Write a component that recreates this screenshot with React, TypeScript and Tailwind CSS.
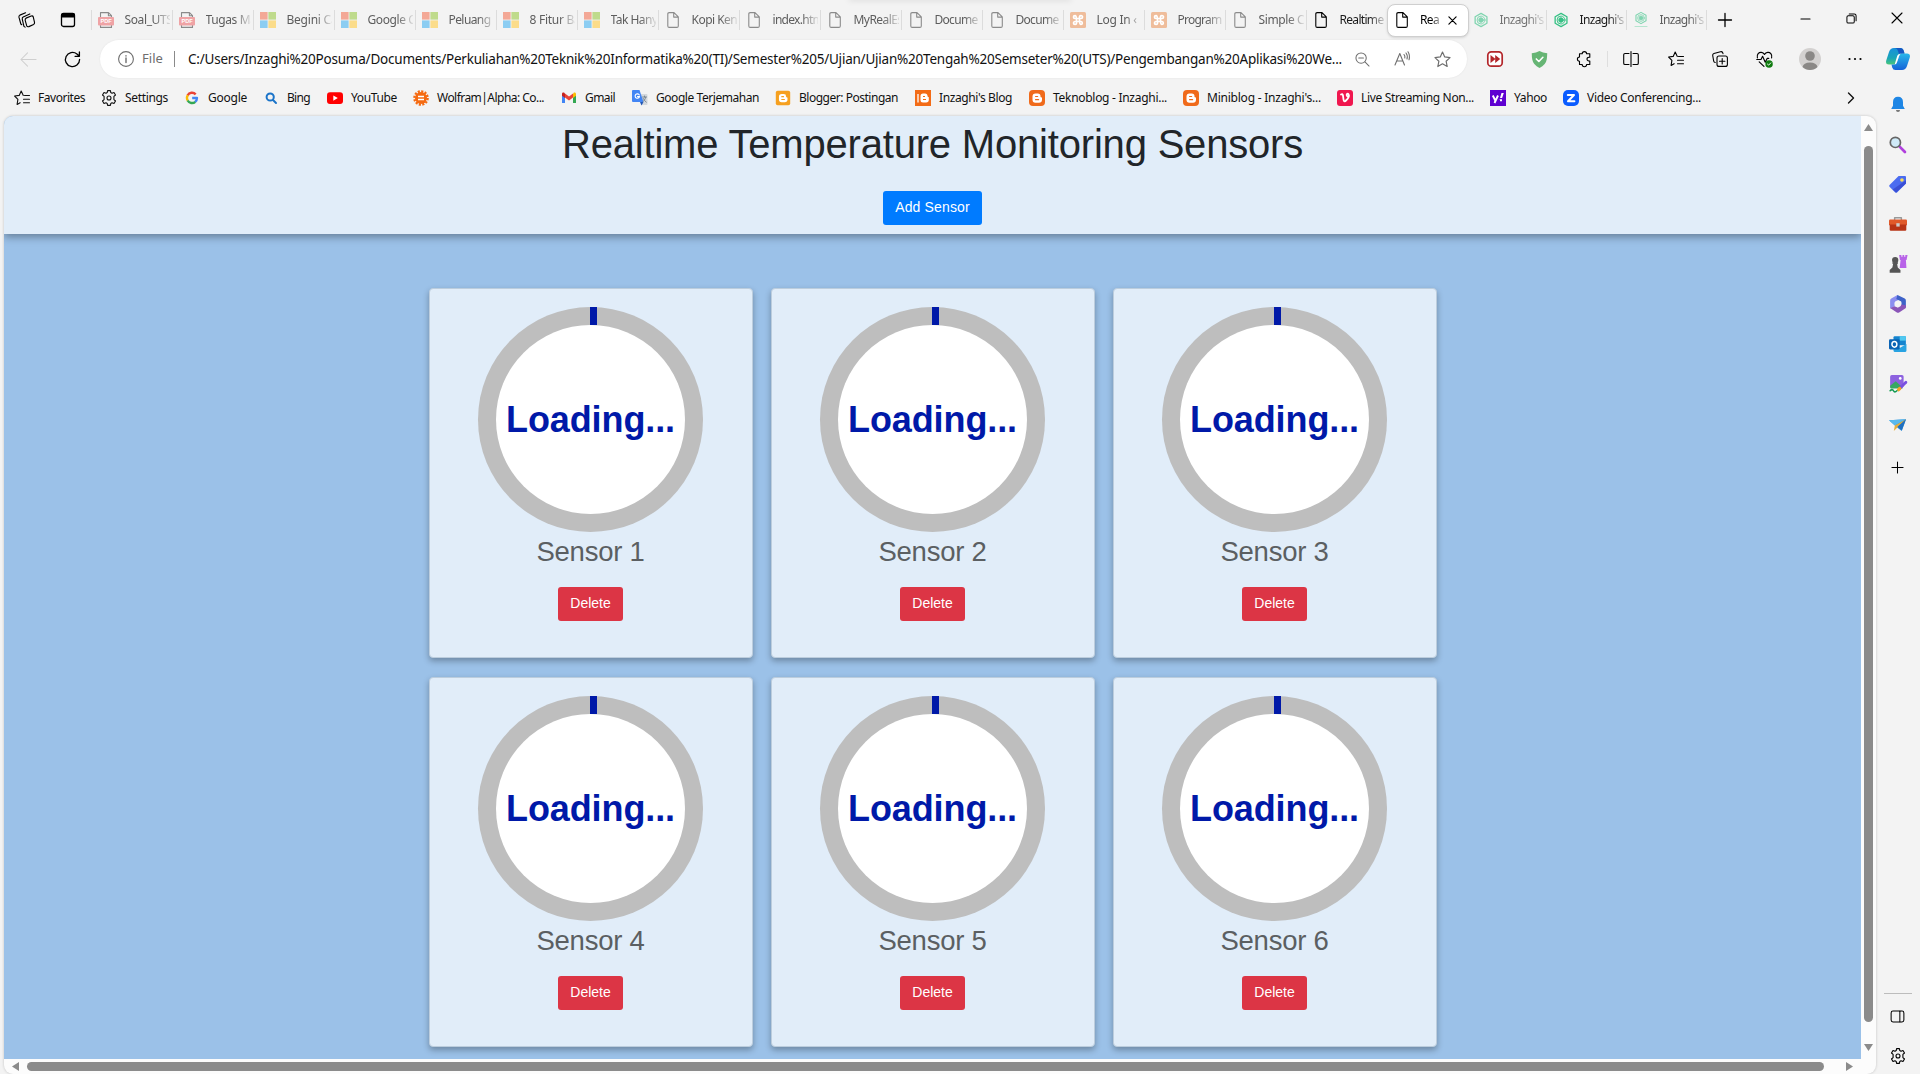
import { useLayoutEffect, useRef, useState, type ReactNode } from "react";

/* Text run whose tracking is set so that it fills the given width. */
function Fit({ w, children, className = "" }: { w: number; children: string; className?: string }) {
  const ref = useRef<HTMLSpanElement>(null);
  const [ls, setLs] = useState(0);
  useLayoutEffect(() => {
    if (ref.current) setLs((w - ref.current.getBoundingClientRect().width) / children.length);
  }, [w, children]);
  return (
    <span ref={ref} className={`whitespace-pre shrink-0 ${className}`} style={{ letterSpacing: `${ls}px` }}>
      {children}
    </span>
  );
}

function Ico({ s = 16, vb = 16, children, className = "", sw = 1.1 }: { s?: number; vb?: number; children: ReactNode; className?: string; sw?: number }) {
  return (
    <svg width={s} height={s} viewBox={`0 0 ${vb} ${vb}`} fill="none" stroke="currentColor" strokeWidth={sw} strokeLinejoin="round" strokeLinecap="round" className={`shrink-0 overflow-visible ${className}`}>
      {children}
    </svg>
  );
}

const GEAR = "M6.6 .6h2.8l.4 2 1.200.7 2-.8 1.500 2.500-1.600 1.400v3.200l1.600 1.400-1.500 2.500-2-.8-1.200.7-.4 2H6.600l-.4-2-1.200-.7-2 .8-1.500-2.500 1.600-1.400V6.400L1.500 5 3 2.500l2 .8 1.200-.7z";

const Gear = () => (
  <Ico><path d={GEAR} /><circle cx="8" cy="8" r="2" /></Ico>
);
const FavList = () => (
  <Ico><path d="M9.300 5.500 7.200 1 5.200 5.400.6 6l3.300 3.400-.8 5 3-1.700M10.500 5.500h5M9.500 9.200h6M9.500 12.800h6" /></Ico>
);
const Pdf = () => (
  <Ico s={16} sw={1.1}>
    <path d="M2.500 5V.6h8L13.500 3.700V5M2.500 13v2.400h11V13M10.400.6v3.200h3" stroke="#8a8a8a" />
    <rect x="0" y="5" width="16" height="8.500" rx="1" fill="#efa3a5" stroke="none" />
    <text x="8" y="11.300" textAnchor="middle" fontSize="5.600" fontWeight="700" fill="#fff" stroke="none" fontFamily="Liberation Sans, sans-serif">PDF</text>
  </Ico>
);
const Ms = () => (
  <Ico><g stroke="none"><path fill="#f3a896" d="M0 0h7.600v7.600H0z" /><path fill="#bfdb8c" d="M8.400 0H16v7.600H8.400z" /><path fill="#8ccdf2" d="M0 8.400h7.600V16H0z" /><path fill="#fbdc8a" d="M8.400 8.400H16V16H8.400z" /></g></Ico>
);
const Page = () => (
  <Ico><path d="M2.800 2q0-1.400 1.400-1.400H9l4.300 4.300V14q0 1.400-1.400 1.400H4.200q-1.400 0-1.400-1.400zM8.700.8v4.300h4.400" /></Ico>
);
const Xampp = () => (
  <Ico><rect width="16" height="16" rx="1.500" fill="#efbd9b" stroke="none" /><path d="M5 3.600c-2 0-2 2.600 0 2.900h6c2-.3 2-2.900 0-2.900s-1.500 1.500-1.500 4.400 0 4.400 1.500 4.400 2-2.600 0-2.900H5c-2 .3-2 2.900 0 2.900S6.500 11 6.500 8 6.500 3.600 5 3.600z" stroke="#fff" strokeWidth="1.700" /></Ico>
);
const Hex = ({ line }: { line?: boolean }) => (
  <Ico>
    <g stroke="#35c184" transform={line ? "translate(2 0) scale(.75)" : "translate(1 1) scale(.88)"}>
      <path d="M8 .5 14.700 4.300v7.400L8 15.500 1.300 11.700V4.300z" strokeWidth="1.500" />
      <circle cx="8" cy="8" r="4.500" /><circle cx="8" cy="8" r="2.600" fill="#35c184" />
    </g>
    {line && <path d="M2 14.500h12" stroke="#8fdcb8" />}
  </Ico>
);

type TabT = [string, number, ReactNode];
const TABS: TabT[] = [
  ["Soal_UTS", 48, <Pdf />], ["Tugas Ma", 51, <Pdf />],
  ["Begini Ca", 51, <Ms />], ["Google C", 48, <Ms />], ["Peluang", 42, <Ms />], ["8 Fitur Ba", 51, <Ms />], ["Tak Hany", 47, <Ms />],
  ["Kopi Kena", 52, <Page />], ["index.html", 53, <Page />], ["MyRealEs", 49, <Page />], ["Docume", 43, <Page />], ["Docume", 43, <Page />],
  ["Log In ‹ ", 43, <Xampp />], ["Program", 44, <Xampp />], ["Simple Ca", 52, <Page />],
];

function Tab({ t, w, icon, dim, last }: { t: string; w: number; icon: ReactNode; dim: boolean; last?: boolean }) {
  return (
    <div className={`flex h-5 items-center pl-[5.500px] shrink-0 border-l border-[#dcdcdc] ${last ? "w-20" : "w-[81px]"} ${dim ? "text-[#5d5d5d]" : "text-[#1a1a1a]"}`}>
      <span className={dim ? "text-[#8b8b8b]" : "text-black"}>{icon}</span>
      <div className="ml-[11px] w-[45px] overflow-hidden text-[12px] leading-5 [mask-image:linear-gradient(to_right,black_64%,transparent_106%)]">
        <Fit w={w}>{t}</Fit>
      </div>
    </div>
  );
}

const Blogger = ({ c, r = 3 }: { c: string; r?: number }) => (
  <Ico><rect width="16" height="16" rx={r} fill={c} stroke="none" /><path fill="#fff" stroke="none" fillRule="evenodd" d="M6.500 3.500h2.300a2.700 2.700 0 0 1 2.700 2.700c0 .8.200 1 .7 1 .5.100.8.300.8.800v1.700a3 3 0 0 1-3 3H6.500a3 3 0 0 1-3-3V6.500a3 3 0 0 1 3-3zm.1 2.400a.6.600 0 0 0 0 1.200h2a.6.600 0 0 0 0-1.200zm0 3.200a.6.600 0 0 0 0 1.200h3a.6.600 0 0 0 0-1.200z" /></Ico>
);

const MARKS: [string, string, number, ReactNode][] = [
  ["Favorites", "w-[87px]", 47, <FavList />],
  ["Settings", "w-[83px]", 43, <Gear />],
  ["Google", "w-[79px]", 39, <Ico className="p-px"><g strokeWidth="2.700" strokeLinecap="butt"><path stroke="#ea4335" d="M3 5a5.700 5.700 0 0 1 9.200-1.200" /><path stroke="#fbbc05" d="M3.200 11a5.700 5.700 0 0 1 0-6.200" /><path stroke="#34a853" d="M11.800 12.300A5.700 5.700 0 0 1 3 10.800" /><path stroke="#4285f4" d="M8.200 8h5.500a5.700 5.700 0 0 1-2.100 4.400" /></g></Ico>],
  ["Bing", "w-[64px]", 23, <Ico sw={2}><circle cx="7.200" cy="7" r="3.600" stroke="#1b74c9" /><path d="M10 10l3 3" stroke="#1b74c9" /></Ico>],
  ["YouTube", "w-[86px]", 46, <Ico><g stroke="none"><rect y="2.300" width="16" height="11.600" rx="3" fill="#f00" /><path d="M6.300 5.500 10.800 8.100 6.300 10.700z" fill="#fff" /></g></Ico>],
  ["Wolfram|Alpha: Co...", "w-[148px]", 107, <Ico><circle cx="8" cy="8" r="6" fill="#f56a11" stroke="none" /><circle cx="8" cy="8" r="6.600" stroke="#f56a11" strokeWidth="2.400" strokeDasharray="2.100 1.355" strokeLinecap="butt" /><path d="M5 6.600h6M5 9.500h6" stroke="#fff" strokeWidth="1.500" strokeLinecap="butt" /></Ico>],
  ["Gmail", "w-[71px]", 30, <Ico><g stroke="none"><path d="M1 4v9h3V7z" fill="#4285f4" /><path d="M12 7v6h3V4z" fill="#34a853" /><path d="M12 4v4l3-2.200V4c0-1.300-1.500-2-2.500-1z" fill="#fbbc04" /><path d="M4 3.500v4L8 10.500l4-3v-4L8 6.500z" fill="#ea4335" /><path d="M1 4v1.800L4 8V3.500L3.500 3C2.500 2.200 1 2.700 1 4z" fill="#c5221f" /></g></Ico>],
  ["Google Terjemahan", "w-[143px]", 103, <Ico><g stroke="none"><path d="M7 4h7.500q1 0 1 1v9q0 1-1 1H9z" fill="#d4d8dc" /><path d="M1 0h6.500L11.500 12H1q-1 0-1-1V1q0-1 1-1z" fill="#4285f4" /><path d="M8 12h3.500L9.500 15.500z" fill="#1f56b8" /></g><path d="M7.300 5A2.200 2.200 0 1 0 7.500 6.600H5.500" stroke="#fff" /><path d="M10.500 7h4M12.500 6v1M13.800 7.200q-.5 3-3 4.500M11.300 8.500q1 2.500 3 3.700" stroke="#6b7a87" strokeWidth=".8" /></Ico>],
  ["Blogger: Postingan", "w-[140px]", 99, <span className="block scale-90"><Blogger c="#f6a01f" r={2} /></span>],
  ["Inzaghi's Blog", "w-[114px]", 73, <Ico><rect width="16" height="16" fill="#f36b16" stroke="none" /><path d="M3 4v8.500" stroke="#fff" strokeLinecap="butt" strokeWidth="1.300" /><path fill="#fff" stroke="none" fillRule="evenodd" d="M8 3.500h2q2.500 0 2.500 2.500 0 1 1.300 1.300v2.500q0 2.700-2.700 2.700H8q-2.500 0-2.500-2.500V6q0-2.500 2.500-2.500zm0 2.500v1h2V6zm0 3v1h3V9z" /></Ico>],
  ["Teknoblog - Inzaghi...", "w-[154px]", 114, <Blogger c="#f06a1a" r={4} />],
  ["Miniblog - Inzaghi's...", "w-[154px]", 114, <Blogger c="#f06a1a" r={4} />],
  ["Live Streaming Non...", "w-[153px]", 113, <Ico><rect width="16" height="16" rx="3" fill="#f0174f" stroke="none" /><path d="M4 4.500c2-1.200 2 1 2.300 3.500.2 2.500.7 4.500 2.700 2.500s3.500-5 2.500-6.300-2.800.300-1.300 2" stroke="#fff" strokeWidth="1.800" /></Ico>],
  ["Yahoo", "w-[73px]", 33, <Ico><rect width="16" height="16" fill="#5f01d1" stroke="none" /><path d="M2.800 5.500 5.300 10.500M8 5.500 4.500 13M9.800 9.800v.3" stroke="#fff" strokeWidth="1.900" strokeLinecap="butt" /><path d="M11.500 3h2.300l-1.700 5H10zM10 9.200h2v2h-2z" fill="#fff" stroke="none" /></Ico>],
  ["Video Conferencing...", "w-[150px]", 114, <Ico><rect width="16" height="16" rx="5" fill="#0b5cff" stroke="none" /><path d="M4.800 5h6.200l-6 6.200h6.400" stroke="#fff" strokeWidth="2" /></Ico>],
];

const Slot = ({ className, children }: { className: string; children: ReactNode }) => (
  <div className={`flex h-full shrink-0 items-center justify-center ${className}`}>{children}</div>
);

function TabStrip() {
  return (
    <div className="flex h-10 items-center text-black">
      <Slot className="w-[52px]">
        <Ico s={17} vb={18} sw={1.200}><path d="M8.500 6.500 14 4.300q1.700-.5 2.200 1L17.500 11q.3 1.500-1 2.200l-5 2.300q-1.700.5-2.300-1L7.600 8.800q-.3-1.600.9-2.300zM7.500 16 6.300 15.200 4.500 7.500Q4.300 6 5.500 5.300L12.500 2M4 13.500l-1-.8L1 5.500Q.8 4 2 3.300L8 .8" /></Ico>
      </Slot>
      <Slot className="w-8">
        <Ico><rect x="1.500" y="1.500" width="13" height="13" rx="2" strokeWidth="1.300" /><path d="M1 5.500V3q0-2 2-2h10q2 0 2 2v2.500z" fill="black" stroke="none" /></Ico>
      </Slot>
      <div className="w-[7px] shrink-0" />
      {TABS.map(([t, w, icon], i) => <Tab key={i} t={t} w={w} icon={icon} dim />)}
      <Tab t="Realtime" w={44} icon={<Page />} dim={false} />
      <div className="z-10 flex h-[33px] w-[82px] shrink-0 items-center rounded-lg border border-[#cfcfcf] bg-white pl-[6px] shadow-sm">
        <Page />
        <div className="ml-[10px] w-[19px] overflow-hidden text-[12px] leading-5 [mask-image:linear-gradient(to_right,black_60%,rgba(0,0,0,.4))]"><Fit w={19}>Rea</Fit></div>
        <Ico s={9} vb={10} className="ml-[9px]" sw={1.300}><path d="M1 1l8 8M9 1 1 9" /></Ico>
      </div>
      <div className="-ml-[2px] flex">
        <div className="-ml-px h-5 w-[80px] opacity-60 [&>div]:border-transparent"><Tab t="Inzaghi's" w={44} icon={<Hex />} dim={false} last /></div>
        <Tab t="Inzaghi's" w={44} icon={<Hex />} dim={false} last />
        <Tab t="Inzaghi's" w={44} icon={<span className="block opacity-60"><Hex line /></span>} dim last />
        <div className="h-5 border-l border-[#dcdcdc]" />
      </div>
      <Slot className="w-9"><Ico s={14} vb={14} sw={1.300}><path d="M7 .5v13M.5 7h13" /></Ico></Slot>
      <Slot className="ml-auto w-[45px] pb-1"><Ico s={11} vb={12}><path d="M1 6.500h10" /></Ico></Slot>
      <Slot className="w-[46px] pb-1"><Ico s={11} vb={12}><rect x="1" y="3" width="8" height="8" rx="1.500" /><path d="M3.500 1H9q2 0 2 2v5.500" /></Ico></Slot>
      <Slot className="w-[46px] pb-1"><Ico s={12} vb={12}><path d="M1 1l10 10M11 1 1 11" /></Ico></Slot>
    </div>
  );
}

function Toolbar() {
  return (
    <div className="flex h-[38px] items-center text-black">
      <Slot className="w-14"><Ico s={17} vb={18} className="text-[#cfcfcf]"><path d="M17 9H1M8 2 1 9l7 7" /></Ico></Slot>
      <Slot className="w-8"><Ico s={17} vb={18} sw={1.400}><path d="M16.500 9A7.500 7.500 0 1 1 13.700 3.200L16 5.300M16.300 1v4.600h-4.600" /></Ico></Slot>
      <div className="ml-3 flex h-[38px] w-[1367px] shrink-0 items-center rounded-full bg-white pl-[18px] text-[#6e6e6e] shadow-[0_0_2px_rgba(0,0,0,.08)]">
        <Ico s={16}><circle cx="8" cy="8" r="7.400" /><path d="M8 7v4.500M8 4.700v.3" strokeWidth="1.400" /></Ico>
        <Fit w={21} className="ml-2 text-[13px]">File</Fit>
        <div className="ml-[11px] h-4 w-px bg-[#8a8a8a]" />
        <Fit w={1154} className="ml-[13px] text-[13.500px] text-[#111]">C:/Users/Inzaghi%20Posuma/Documents/Perkuliahan%20Teknik%20Informatika%20(TI)/Semester%205/Ujian/Ujian%20Tengah%20Semseter%20(UTS)/Pengembangan%20Aplikasi%20We...</Fit>
        <Slot className="w-10"><Ico s={15}><circle cx="6.500" cy="6.500" r="5.500" /><path d="M10.600 10.600 15 15M4 6.500h5" /></Ico></Slot>
        <Slot className="w-10"><Ico><path d="M1 14 5.800 2.500 10.500 14M2.700 10h6.200M10 3.500q1.300 1.500.8 3.500M12 2q2 2.500 1 6M14 .8q2.300 3.500 1 8" /></Ico></Slot>
        <Slot className="w-10"><Ico s={17}><path d="m8 1 2.100 4.600 5 .6-3.700 3.400 1 5L8 12.100l-4.400 2.500 1-5L.9 6.200l5-.6z" /></Ico></Slot>
      </div>
      <div className="flex h-full flex-1 items-center pl-[6px]">
        <Slot className="w-[44px]"><Ico><rect x=".8" y=".8" width="14.400" height="14.400" rx="3.500" fill="#fff" stroke="#b3262a" strokeWidth="1.700" /><path d="M3.500 4v8l5-4zM8.200 4v8l5-4z" fill="#b3262a" stroke="none" /></Ico></Slot>
        <Slot className="w-[44px]"><Ico s={17}><path d="M8 0q3 2 7.300 2-.2 4.500-.5 6Q14 13 8 16 2 13 1.200 8 .8 6.500.700 2 5 2 8 0z" fill="#66b574" stroke="none" /><path d="m5 7.500 2.400 2.400 3.800-4" stroke="#fff" strokeWidth="1.500" /></Ico></Slot>
        <Slot className="w-[45px]"><Ico><path d="M3.500 2.800h2.700a2.200 2.200 0 0 1 4.400 0h3.200v3.400h-.9a1.900 1.900 0 1 0 0 3.800h.9v3.500h-3.200a2.200 2.200 0 0 1-4.400 0H3.500v-3.300a2.100 2.100 0 1 1 0-4.200z" /></Ico></Slot>
        <div className="ml-px h-4 w-px bg-[#dedede]" />
        <Slot className="w-[46px]"><Ico><path d="M6 2.500H2q-1.300 0-1.300 1.300v8.400q0 1.300 1.300 1.300h4M10 2.500h4q1.300 0 1.300 1.300v8.400q0 1.300-1.300 1.300h-4M8 .5v15" /></Ico></Slot>
        <Slot className="w-[44px]"><FavList /></Slot>
        <Slot className="w-[44px]"><Ico><rect x="5" y="5" width="10.400" height="10.400" rx="2" /><path d="M10.200 7.500v5.400M7.500 10.200h5.400M3.300 11.500q-1.300-.2-1.600-1.400L.7 4.500q-.2-1.600 1.200-2L8.500.7q1.600-.3 2.200 1l.3 1" /></Ico></Slot>
        <Slot className="w-[45px]"><Ico s={17}><path d="M1.300 6.500C.3 3 3 1 5 1.300q2 .3 3 2 1-1.700 3-2c2-.3 4.700 1.700 3.700 5.200M.7 8h4l1.500-3 2.500 5.500L10.500 7H12M3 10.200l4.500 4.300" /><circle cx="12.300" cy="12.200" r="3.500" fill="#0f7b0f" stroke="none" /><path d="m10.800 12.300 1.100 1 2-2.100" stroke="#fff" strokeWidth=".9" /></Ico></Slot>
        <Slot className="w-[45px]"><Ico s={22} vb={22}><g stroke="none"><circle cx="11" cy="11" r="11" fill="#d3d1d0" /><circle cx="11" cy="8" r="4.800" fill="#8a8886" /><path d="M3.500 19q1-4.500 7.500-4.500t7.500 4.500q-3 3-7.500 3t-7.500-3z" fill="#8a8886" /></g></Ico></Slot>
        <Slot className="w-[46px]"><Ico><g fill="currentColor" stroke="none"><circle cx="2.500" cy="8" r="1.100" /><circle cx="8" cy="8" r="1.100" /><circle cx="13.500" cy="8" r="1.100" /></g></Ico></Slot>
        <Slot className="w-[40px]">
          <svg width="24" height="22" viewBox="0 0 24 22">
            <defs>
              <linearGradient id="ca" x1="0" y1="0" x2="0" y2="1"><stop stopColor="#1690dc" /><stop offset=".6" stopColor="#18a4b8" /><stop offset="1" stopColor="#49c779" /></linearGradient>
              <linearGradient id="cb" x1="0" y1="0" x2="0" y2="1"><stop stopColor="#28b9ea" /><stop offset="1" stopColor="#1462d8" /></linearGradient>
            </defs>
            <path d="M8 0h6.500Q17 0 17.800 3l.7 2.500H16q-2 0-2.700 2L10.500 15q-.6 1.600-2.500 1.600H3Q-1 16.500.4 12L3 4Q4.300 0 8 0z" fill="url(#ca)" />
            <path d="M16 22H9.500Q7 22 6.200 19.500l-.7-3H8q2 0 2.700-2L13.500 7q.6-1.600 2.500-1.600h5q4 .1 2.600 4.600L21 18q-1.300 4-5 4z" fill="url(#cb)" />
            <path d="M14 0q3 0 3.800 3l.7 2.500h-3q-1.500 0-2.200 1.500L12 3Q11.500.5 9 0z" fill="#1557c2" />
            <path d="M15.500 5.500q-1.500 0-2.200 2L10.700 15q-.5 1.300-2 1.600 0-.3 2.500-8.600.8-2.500 4.300-2.500z" fill="#fff" />
          </svg>
        </Slot>
      </div>
    </div>
  );
}

const SIDE: ReactNode[] = [
  <Ico><g stroke="none"><path d="M8 .8q5 0 5 5.500v3.500l1.800 3.200H1.200L3 9.800V6.300Q3 .8 8 .8z" fill="#1e86e5" /><path d="M6 14h4q0 2-2 2t-2-2z" fill="#777" /></g></Ico>,
  <Ico s={17}><path d="m10 10 5 5" stroke="#b040dd" strokeWidth="2.600" /><circle cx="6" cy="6" r="4.800" fill="#cfeaf7" stroke="#666" strokeWidth="1.600" /></Ico>,
  <Ico s={17}><path d="M9 0h6q1 0 1 1v6L7.500 15.500q-.8.700-1.600 0L.5 10q-.7-.8 0-1.600z" fill="#4b6cf0" stroke="none" /><path d="m3.500 12.800 3.200 2.700L16 7V4z" fill="#3a4fd5" stroke="none" /><circle cx="12.200" cy="3.800" r="1.700" fill="#f7dc5b" stroke="none" /></Ico>,
  <Ico s={18}><path d="M5 4V2.500h6V4" stroke="#999" strokeWidth="1.300" /><path d="M1 4h14q1 0 1 1v4H0V5q0-1 1-1z" fill="#e0592a" stroke="none" /><path d="M.6 8.500h14.800V13q0 1-1 1H1.600q-1 0-1-1z" fill="#b83416" stroke="none" /><rect x="6.500" y="7.300" width="3" height="3" fill="#ccc" stroke="none" /></Ico>,
  <Ico s={18}><g stroke="none"><path d="M9 0h2v1.500h1V0h1.500v1.500h1V0h2l-.9 4.500H15l.5 7h-6L10.300 4.500H9.700z" fill="#b863e8" /><circle cx="5.500" cy="4.500" r="2.800" fill="#555" /><path d="M3 6.500h5v1.200H7.200l.6 3.300 2.400 2.300v2.500H.6v-2.500L3 11l.7-3.300H3z" fill="#555" /></g></Ico>,
  <Ico s={18}><g stroke="none"><path d="M7.500 0 2 3.200Q1 3.800 1 5v7l4-2V6.500L11 3z" fill="#8b8ef0" /><path d="m7.500 0 6.500 3.200Q15 3.800 15 5v6l-4-2V6L6.500 3.500z" fill="#3e62c8" /><path d="m1 11.500 6 4q1 .5 2 0l6-4V9l-4-.5-3 2.800L5 10z" fill="#8a55b8" /><circle cx="8" cy="7.800" r="2.900" fill="#f3f3f3" /></g></Ico>,
  <Ico s={18}><g stroke="none"><path d="M5 1h9q1 0 1 1v7H4V2q0-1 1-1z" fill="#1484cf" /><path d="M9.500 1H15v4H9.500z" fill="#50c8f0" /><path d="M4 8l5.500 3.500L15.500 8v6q0 1-1 1H5q-1 0-1-1z" fill="#28a3e2" /><rect x="0" y="3.800" width="9.500" height="9" rx="1" fill="#0b64b5" /></g><ellipse cx="4.800" cy="8.300" rx="2.200" ry="2.500" stroke="#fff" strokeWidth="1.300" /></Ico>,
  <Ico s={18}><g stroke="none"><rect x="1" y="0" width="12" height="11" rx="1.500" fill="#8d62df" /><path d="m1 9.500 5-4 6 5.500v1H2q-1 0-1-1z" fill="#36a861" /><circle cx="10" cy="3" r="1.200" fill="#fff" /></g><path d="M15 6.500 9.500 12" stroke="#7a50e0" strokeWidth="2.500" /><path d="m8.500 13 1-1" stroke="#f5a524" strokeWidth="3" /><path d="M1 14q2-2 3 0t3 0" stroke="#159c54" strokeWidth="1.400" /></Ico>,
  <Ico s={17}><g stroke="none"><path d="M0 4 16 3 12 14 8 11z" fill="#2a8bd8" /><path d="M0 4 16 3 5.500 9z" fill="#58b9ec" /><path d="M5.500 9 16 3 4.500 14z" fill="#e5ae3c" /><path d="M8 10 16 3 12 13.500z" fill="#1f6fc0" /></g></Ico>,
];

function Sidebar() {
  return (
    <aside className="flex w-11 shrink-0 flex-col items-center pr-px text-black">
      <div className="flex flex-col items-center pt-[6px]">
        {SIDE.map((s, i) => <div key={i} className="flex h-10 items-center">{s}</div>)}
        <div className="flex h-[46px] items-center"><Ico s={13} vb={14}><path d="M7 1v12M1 7h12" /></Ico></div>
      </div>
      <div className="mt-auto h-px w-7 bg-[#bcbcbc]" />
      <div className="flex h-[44px] items-center"><Ico s={15}><rect x="1.200" y="2.200" width="13.600" height="11.600" rx="2" /><path d="M10.500 2.500v11" /></Ico></div>
      <div className="flex h-[36px] items-center"><Gear /></div>
    </aside>
  );
}

function SensorCard({ n }: { n: number }) {
  return (
    <div className="flex h-[370px] w-[324px] flex-col items-center rounded border border-[#bccddd] bg-[#e1edf9] pt-[18px] shadow-[0_3px_6px_rgba(0,0,0,.3)]">
      <div className="relative flex size-[225px] shrink-0 items-center justify-center rounded-full bg-[#bebebe]">
        <div className="absolute left-[112px] top-0 h-[18px] w-[7px] bg-[#0019a8]" />
        <div className="flex size-[189px] items-center justify-center rounded-full bg-white text-[36px] font-bold tracking-[-0.1px] text-[#0019a8]"><span>Loading...</span></div>
      </div>
      <h3 className="mt-[3px] text-[27.500px] leading-[34px] tracking-[-0.25px] text-[#5b5f62]">Sensor {n}</h3>
      <button className="mt-[18px] h-[34px] w-[65px] rounded-[3px] bg-[#dc3545] pb-[1px] text-[14px] text-white">Delete</button>
    </div>
  );
}

const Arrow = ({ r }: { r: string }) => (
  <svg width="9" height="7" viewBox="0 0 9 7" className={`shrink-0 ${r}`}><path d="M4.500 0 9 7H0z" fill="#8b8b8b" /></svg>
);

export default function App() {
  return (
    <div className="relative flex h-[1074px] w-[1920px] flex-col overflow-hidden bg-[#f3f3f3] font-['Noto_Sans',sans-serif]">
      <div className="absolute left-[849px] top-[-3px] h-[3px] w-[222px] bg-white shadow-[0_0_6px_rgba(0,0,0,.15)]" />
      <TabStrip />
      <Toolbar />
      <div className="flex min-h-0 flex-1">
        <div className="flex w-[1876px] shrink-0 flex-col">
          <div className="flex h-[38px] shrink-0 items-center pl-[14px] pb-[2px] pt-[3px] text-[12px] text-[#111]">
            {MARKS.map(([t, cls, w, icon]) => (
              <div key={t} className={`flex shrink-0 items-center gap-2 ${cls}`}>{icon}<Fit w={w}>{t}</Fit></div>
            ))}
            <Ico s={12} vb={12} sw={1.400} className="ml-auto mr-[19px]"><path d="m3.500 1 5 5-5 5" /></Ico>
          </div>
          <div className="ml-1 flex min-h-0 flex-1 flex-col overflow-hidden rounded-[9px] bg-[#fcfcfc] shadow-[0_0_3px_rgba(0,0,0,.2)]">
            <div className="flex min-h-0 flex-1">
              <main className="flex w-[1857px] shrink-0 flex-col items-center overflow-hidden bg-[#9bc1e8] font-['Liberation_Sans',Arial,sans-serif]">
                <header className="flex h-[118px] w-full shrink-0 flex-col items-center bg-[#e1edf9] shadow-[0_3px_8px_rgba(0,0,0,.35)]">
                  <h1 className="mt-[4px] text-[40px] leading-[48px] tracking-[-0.19px] text-[#212529]">Realtime Temperature Monitoring Sensors</h1>
                  <button className="mt-[23px] h-[34px] w-[99px] rounded-[3px] bg-[#007bff] pb-[1px] text-[14px] tracking-[0.15px] text-white">Add Sensor</button>
                </header>
                <div className="mt-[54px] grid grid-cols-3 gap-x-[18px] gap-y-[19px]">
                  {[1, 2, 3, 4, 5, 6].map((n) => <SensorCard key={n} n={n} />)}
                </div>
              </main>
              <div className="flex flex-1 flex-col items-center">
                <div className="mt-[8px]"><Arrow r="" /></div>
                <div className="mt-[15px] h-[876px] w-[9px] rounded-full bg-[#8b8b8b]" />
                <div className="mt-[22px]"><Arrow r="rotate-180" /></div>
              </div>
            </div>
            <div className="flex h-[15px] shrink-0 items-center pl-[7px]">
              <Arrow r="-rotate-90" />
              <div className="ml-[7px] h-[9px] w-[1797px] rounded-full bg-[#8b8b8b]" />
              <div className="ml-[21px]"><Arrow r="rotate-90" /></div>
            </div>
          </div>
        </div>
        <Sidebar />
      </div>
    </div>
  );
}
